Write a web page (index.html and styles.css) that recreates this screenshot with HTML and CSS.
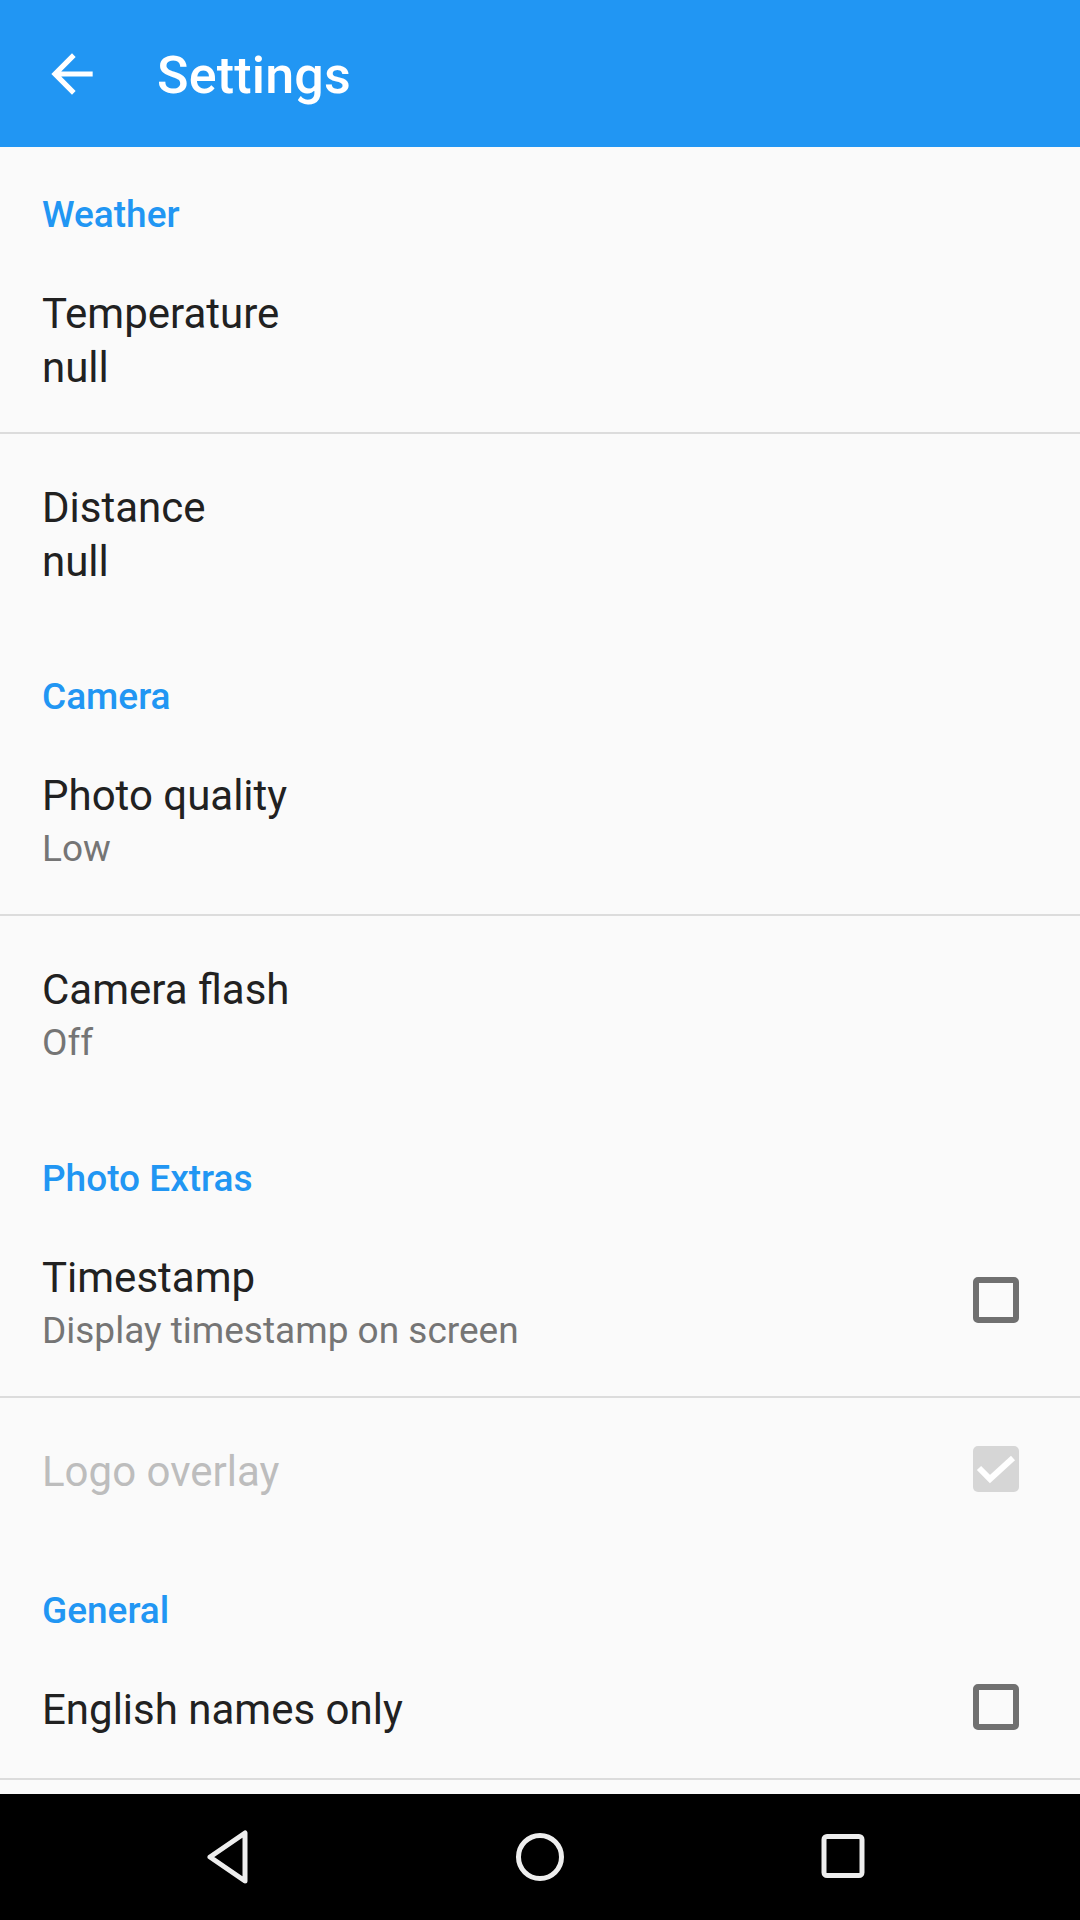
FILE: index.html
```html
<!DOCTYPE html>
<html lang="en">
<head>
<meta charset="utf-8">
<title>Settings</title>
<link rel="stylesheet" href="styles.css">
</head>
<body>
<div class="screen">
  <header class="appbar">
    <svg class="back" viewBox="0 0 24 24" aria-hidden="true"><path d="M20 11H7.83l5.59-5.59L12 4l-8 8 8 8 1.41-1.41L7.83 13H20v-2z"/></svg>
    <h1 class="appbar-title">Settings</h1>
  </header>

  <main class="content">
    <section class="category first">
      <h2 class="cat-title">Weather</h2>
      <div class="pref divided">
        <div class="pref-text">
          <div class="pref-title">Temperature</div>
          <div class="pref-summary null">null</div>
        </div>
      </div>
      <div class="pref">
        <div class="pref-text">
          <div class="pref-title">Distance</div>
          <div class="pref-summary null">null</div>
        </div>
      </div>
    </section>

    <section class="category">
      <h2 class="cat-title">Camera</h2>
      <div class="pref divided">
        <div class="pref-text">
          <div class="pref-title">Photo quality</div>
          <div class="pref-summary">Low</div>
        </div>
      </div>
      <div class="pref">
        <div class="pref-text">
          <div class="pref-title">Camera flash</div>
          <div class="pref-summary">Off</div>
        </div>
      </div>
    </section>

    <section class="category">
      <h2 class="cat-title">Photo Extras</h2>
      <div class="pref divided">
        <div class="pref-text">
          <div class="pref-title">Timestamp</div>
          <div class="pref-summary">Display timestamp on screen</div>
        </div>
        <span class="checkbox"></span>
      </div>
      <div class="pref disabled">
        <div class="pref-text">
          <div class="pref-title">Logo overlay</div>
        </div>
        <span class="checkbox checked">
          <svg viewBox="0 0 46 46" aria-hidden="true"><path d="M6 22 L17 33 L40 12"/></svg>
        </span>
      </div>
    </section>

    <section class="category">
      <h2 class="cat-title">General</h2>
      <div class="pref divided">
        <div class="pref-text">
          <div class="pref-title">English names only</div>
        </div>
        <span class="checkbox"></span>
      </div>
    </section>
  </main>

  <nav class="navbar">
    <div class="nav-btn">
      <svg viewBox="0 0 60 60" aria-hidden="true"><path d="M38 6 L38 54 L3 30 Z"/></svg>
    </div>
    <div class="nav-btn">
      <svg viewBox="0 0 60 60" aria-hidden="true"><circle cx="30" cy="30" r="21.5"/></svg>
    </div>
    <div class="nav-btn">
      <svg viewBox="0 0 60 60" aria-hidden="true"><rect x="11" y="9.5" width="38" height="39" rx="3"/></svg>
    </div>
  </nav>
</div>
</body>
</html>
```

FILE: styles.css
```css
* {
  box-sizing: border-box;
}

html, body {
  margin: 0;
  padding: 0;
}

body {
  width: 1080px;
  height: 1920px;
  background: #fafafa;
  font-family: Roboto, "Noto Sans", "Liberation Sans", sans-serif;
  overflow: hidden;
}

.screen {
  display: flex;
  flex-direction: column;
  height: 1920px;
}

/* App bar */
.appbar {
  flex: 0 0 147px;
  height: 147px;
  background: #2196f3;
  display: flex;
  align-items: center;
  padding-left: 41px;
}

.back {
  width: 62px;
  height: 62px;
  fill: #ffffff;
  flex: 0 0 auto;
}

.appbar-title {
  margin: 5px 0 0 54px;
  color: #ffffff;
  font-size: 52px;
  font-weight: 500;
  line-height: 62px;
  letter-spacing: 0.2px;
}

/* Content */
.content {
  flex: 1 1 auto;
  overflow: hidden;
  background: #fafafa;
}

.category {
  display: flex;
  flex-direction: column;
}

.cat-title {
  margin: 0;
  padding: 46px 42px 0;
  color: #2196f3;
  font-size: 37px;
  font-weight: 500;
  line-height: 50px;
}

.category.first .cat-title {
  padding-top: 43px;
}

.pref {
  display: flex;
  align-items: center;
  padding: 0 42px;
}

.pref.divided {
  border-bottom: 2px solid #dcdcdc;
}

.pref-text {
  flex: 1 1 auto;
  padding: 46px 0 40px;
}

.pref-title {
  color: #212121;
  font-size: 42px;
  line-height: 56px;
}

.pref-summary {
  color: #757575;
  font-size: 37px;
  line-height: 50px;
}

.pref-summary.null {
  color: #212121;
  font-size: 42px;
  line-height: 52px;
  margin-bottom: -2px;
}

.pref.disabled .pref-title {
  color: #bdbdbd;
}

/* Checkboxes */
.checkbox {
  flex: 0 0 46px;
  width: 46px;
  height: 46px;
  margin-right: 19px;
  border: 6px solid #707070;
  border-radius: 5px;
  display: flex;
  align-items: center;
  justify-content: center;
}

.checkbox.checked {
  border: none;
  background: #d6d6d6;
}

.checkbox.checked svg {
  width: 46px;
  height: 46px;
  fill: none;
  stroke: #ffffff;
  stroke-width: 6;
}

/* Navigation bar */
.navbar {
  flex: 0 0 126px;
  height: 126px;
  background: #000000;
  display: flex;
  justify-content: center;
  align-items: center;
  gap: 183px;
}

.nav-btn {
  width: 120px;
  height: 60px;
  display: flex;
  justify-content: center;
  align-items: center;
}

.nav-btn svg {
  width: 60px;
  height: 60px;
  fill: none;
  stroke: #eeeeee;
  stroke-width: 5;
  stroke-linejoin: round;
  stroke-linecap: round;
}
```
